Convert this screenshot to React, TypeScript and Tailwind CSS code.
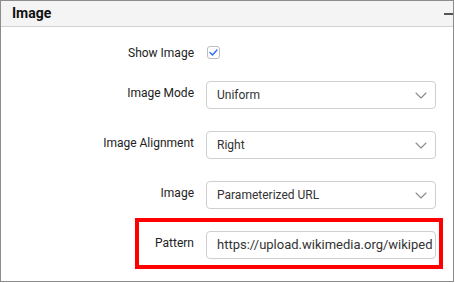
import React from 'react';

const Chevron = () => (
  <svg width="12" height="7" viewBox="0 0 12 7" fill="none" stroke="#8a8a8a" strokeWidth="1.1" strokeLinecap="round" strokeLinejoin="round">
    <path d="M1 1l5 5 5-5" />
  </svg>
);

const Row = ({ label, children }: { label: string; children: React.ReactNode }) => (
  <div className="flex items-start gap-3">
    <div className="w-[193px] text-right text-[12px] leading-[16px] text-[#222] pt-[4px]">{label}</div>
    {children}
  </div>
);

const Select = ({ value }: { value: string }) => (
  <div className="w-[230px] h-[28px] border border-[#cfcfcf] rounded-[4px] flex items-center justify-between pl-[10px] pr-[8px] text-[12px] text-[#333]">
    <span>{value}</span>
    <Chevron />
  </div>
);

export default function App() {
  return (
    <div className="relative w-[454px] h-[282px] border border-[#8c8c8c] bg-white font-['Roboto',sans-serif]">
      <div className="h-[26px] bg-[#f4f4f4] border-b border-[#d2d2d2] flex items-center justify-between pl-[11px]">
        <span className="text-[14px] font-bold text-[#111]">Image</span>
        <span className="w-[9px] h-[2px] bg-[#555]" />
      </div>

      <div className="flex flex-col gap-[22px] pt-[19px]">
        <div className="flex items-center gap-3 h-[13px]">
          <div className="w-[193px] text-right text-[12px] text-[#222]">Show Image</div>
          <div className="ml-[1px] w-[13px] h-[13px] border border-[#bdbdbd] rounded-[3px] flex items-center justify-center">
            <svg width="9" height="7" viewBox="0 0 9 7" fill="none" stroke="#2f6bf2" strokeWidth="1.4" strokeLinecap="round" strokeLinejoin="round">
              <path d="M1 3.5l2.4 2.4L8 1" />
            </svg>
          </div>
        </div>
        <Row label="Image Mode"><Select value="Uniform" /></Row>
        <Row label="Image Alignment"><Select value="Right" /></Row>
        <Row label="Image"><Select value="Parameterized URL" /></Row>
        <Row label="Pattern">
          <div className="w-[230px] h-[28px] border border-[#cfcfcf] rounded-[4px] flex items-center pl-[10px] overflow-hidden whitespace-nowrap text-[13px] text-[#333]">
            https://upload.wikimedia.org/wikiped
          </div>
        </Row>
      </div>

      <div className="absolute left-[134px] top-[217px] w-[308px] h-[51px] border-4 border-[#ff0000] pointer-events-none" />
    </div>
  );
}
